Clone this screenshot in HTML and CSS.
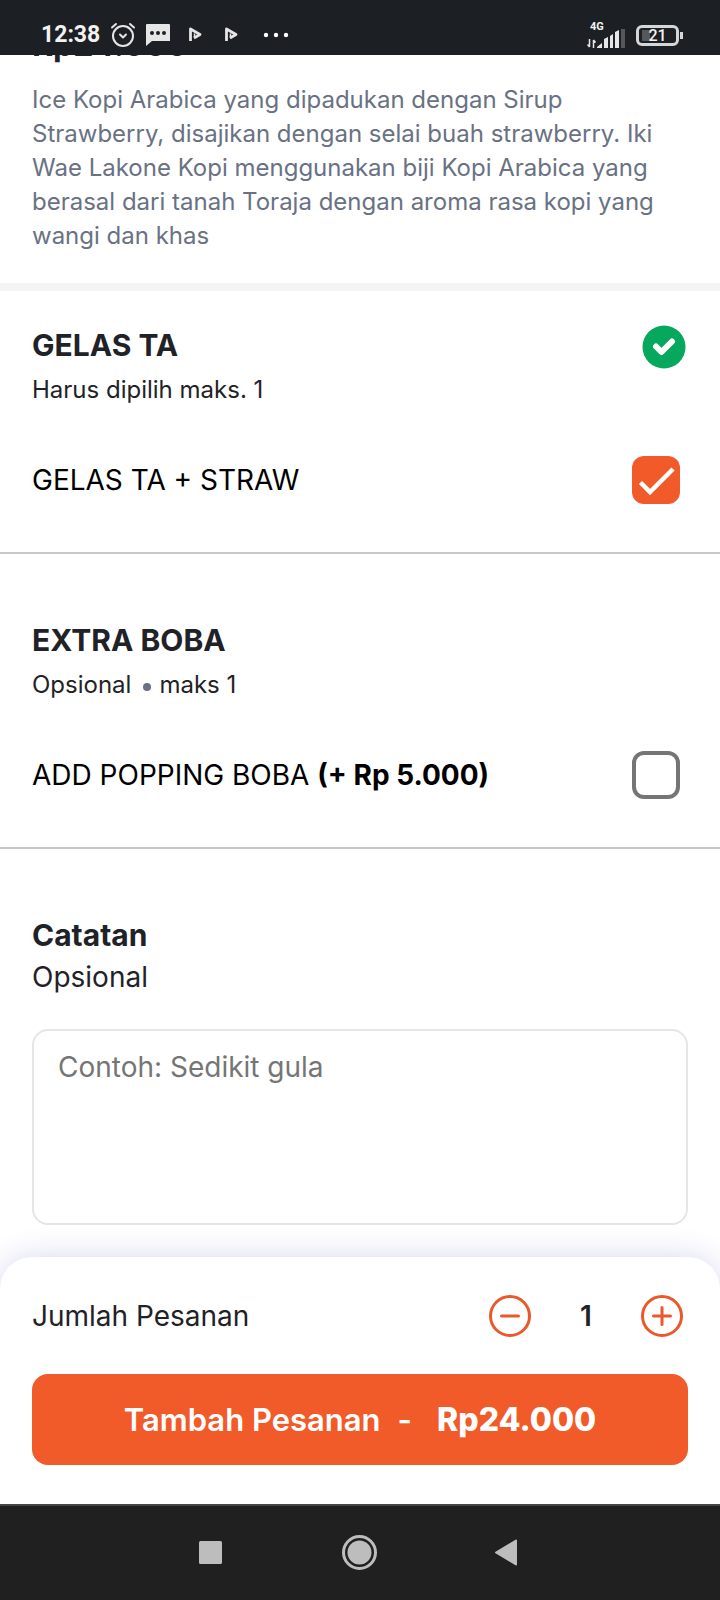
FILE: index.html
```html
<!DOCTYPE html>
<html lang="id">
<head>
<meta charset="utf-8">
<meta name="viewport" content="width=device-width, initial-scale=1">
<title>Tambah Pesanan</title>
<link rel="stylesheet" href="styles.css">
</head>
<body>
<div class="screen">
  <header class="status">
    <div class="status-left">
      <span class="clock">12:38</span>
      <svg class="icon-alarm" width="26" height="26" viewBox="0 0 26 26" fill="none" stroke="#e6e6e6" stroke-width="2" stroke-linecap="round" stroke-linejoin="round">
        <circle cx="13" cy="14" r="10"/><path d="M10 12.500l3 3 3-3M2 5.500l4-3.500M24 5.500l-4-3.500"/>
      </svg>
      <svg class="icon-chat" width="24" height="24" viewBox="0 0 24 24">
        <path d="M1 1h22a1 1 0 0 1 1 1v16H6l-6 5V2a1 1 0 0 1 1-1z" fill="#e6e6e6"/>
        <g fill="#1c1f24"><circle cx="6" cy="10" r="2"/><circle cx="12" cy="10" r="2"/><circle cx="18" cy="10" r="2"/></g>
      </svg>
      <svg class="icon-play" width="14" height="16" viewBox="0 0 14 16" fill="none" stroke="#e6e6e6" stroke-width="2.800" stroke-linejoin="round">
        <path d="M2.500 14V2l9.500 5.500-6 3.500"/><path d="M6.500 6.500v4" stroke-width="1.500"/>
      </svg>
      <svg class="icon-play" width="14" height="16" viewBox="0 0 14 16" fill="none" stroke="#e6e6e6" stroke-width="2.800" stroke-linejoin="round">
        <path d="M2.500 14V2l9.500 5.500-6 3.500"/><path d="M6.500 6.500v4" stroke-width="1.500"/>
      </svg>
      <svg class="icon-more" width="26" height="6" viewBox="0 0 26 6" fill="#fff"><circle cx="3" cy="3" r="2.200"/><circle cx="13" cy="3" r="2.200"/><circle cx="23" cy="3" r="2.200"/></svg>
    </div>
    <div class="status-right">
      <div class="network">
        <span class="network-type">4G</span>
        <svg width="38" height="20" viewBox="0 0 38 20" fill="#e6e6e6">
          <path d="M2.500 10v8M0.500 15.500l2 2.500M6.500 19v-8M8.500 13.500l-2-2.500" fill="none" stroke="#e6e6e6" stroke-width="1.500"/>
          <path d="M10 19v-1l5-4v5zM17 10l4-2v11h-4zM23 7l3-2v14h-3zM28 3l4-2v18h-4z"/>
          <path d="M34 0h4v19h-4z" fill="#55575b"/>
        </svg>
      </div>
      <div class="battery"><span>21</span></div>
    </div>
  </header>

  <main class="content">
    <section class="product">
      <p class="price">Rp24.000</p>
      <p class="description">Ice Kopi Arabica yang dipadukan dengan Sirup Strawberry, disajikan dengan selai buah strawberry. Iki Wae Lakone Kopi menggunakan biji Kopi Arabica yang berasal dari tanah Toraja dengan aroma rasa kopi yang wangi dan khas</p>
    </section>

    <section class="group group-first">
      <div class="group-head">
        <div>
          <h2 class="title">GELAS TA</h2>
          <p class="hint">Harus dipilih maks. 1</p>
        </div>
        <svg class="done" width="44" height="44" viewBox="0 0 44 44">
          <circle cx="22" cy="22" r="21.500" fill="#05a85c"/>
          <path d="M14 21.500l5.500 5.500L30 16.500" fill="none" stroke="#fff" stroke-width="6" stroke-linecap="round" stroke-linejoin="round"/>
        </svg>
      </div>
      <label class="option"><span>GELAS TA + STRAW</span><input class="check" type="checkbox" checked></label>
    </section>

    <section class="group">
      <div class="group-head">
        <div>
          <h2 class="title">EXTRA BOBA</h2>
          <p class="hint hint-split"><span>Opsional</span><i class="dot"></i><span>maks 1</span></p>
        </div>
      </div>
      <label class="option"><span>ADD POPPING BOBA <b>(+ Rp 5.000)</b></span><input class="check" type="checkbox"></label>
    </section>

    <section class="note">
      <label class="title" for="note">Catatan</label>
      <p class="note-hint">Opsional</p>
      <textarea class="note-input" id="note" placeholder="Contoh: Sedikit gula"></textarea>
    </section>
  </main>

  <footer class="sheet">
    <div class="quantity">
      <span>Jumlah Pesanan</span>
      <div class="stepper">
        <button type="button" class="step" aria-label="Kurangi">
          <svg width="44" height="44" viewBox="0 0 44 44" fill="none" stroke="#e9592b" stroke-width="3"><circle cx="22" cy="22" r="19.500"/><path d="M13.500 22h17" stroke-linecap="round"/></svg>
        </button>
        <output class="count">1</output>
        <button type="button" class="step" aria-label="Tambah">
          <svg width="44" height="44" viewBox="0 0 44 44" fill="none" stroke="#e9592b" stroke-width="3"><circle cx="22" cy="22" r="19.500"/><path d="M13.500 22h17M22 13.500v17" stroke-linecap="round"/></svg>
        </button>
      </div>
    </div>
    <button type="button" class="submit"><span>Tambah Pesanan</span><span>-</span><b>Rp24.000</b></button>
  </footer>

  <nav class="system-nav">
    <button type="button" class="nav-key" aria-label="Aplikasi terbaru"><svg width="36" height="36" viewBox="0 0 36 36"><rect x="6" y="7" width="23" height="23" rx="1.500" fill="#bdbdbd"/></svg></button>
    <button type="button" class="nav-key" aria-label="Beranda"><svg width="36" height="36" viewBox="0 0 36 36"><circle cx="17.500" cy="18.500" r="16" fill="none" stroke="#bdbdbd" stroke-width="3"/><circle cx="17.500" cy="18.500" r="12" fill="#bdbdbd"/></svg></button>
    <button type="button" class="nav-key" aria-label="Kembali"><svg width="36" height="36" viewBox="0 0 36 36"><path d="M5 18.500L25 6.500v24z" fill="#bdbdbd" stroke="#bdbdbd" stroke-width="2" stroke-linejoin="round"/></svg></button>
  </nav>
</div>
</body>
</html>
```

FILE: styles.css
```css
* {
  box-sizing: border-box;
}

body,
p,
h2 {
  margin: 0;
}

body {
  background: #fff;
  color: #1f2227;
  font-family: Inter, sans-serif;
  font-size: 28px;
  font-weight: 400;
  line-height: 36px;
}

button {
  padding: 0;
  border: 0;
  background: none;
  font: inherit;
  cursor: pointer;
}

svg {
  display: block;
}

.screen {
  display: flex;
  flex-direction: column;
  min-height: 100vh;
}

/* Status bar */
.status {
  position: sticky;
  top: 0;
  z-index: 2;
  display: flex;
  justify-content: space-between;
  padding: 15px 41px 0;
  height: 55px;
  background: #1c1f24;
  color: #f2f2f2;
  font-family: Roboto, sans-serif;
}

.status-left,
.status-right {
  display: flex;
  align-items: center;
  height: 40px;
}

.clock {
  font-size: 23px;
  font-weight: 700;
}

.icon-alarm,
.icon-chat {
  margin-left: 10px;
}

.icon-play {
  margin-left: 18px;
}

.icon-play + .icon-play {
  margin-left: 22px;
}

.icon-more {
  margin-left: 25px;
}

.network {
  display: flex;
  flex-direction: column;
  width: 38px;
}

.network-type {
  height: 8px;
  padding-left: 3px;
  font-size: 11px;
  font-weight: 700;
  line-height: 12px;
}

.battery {
  position: relative;
  width: 43px;
  height: 21px;
  margin-left: 11px;
  border: 3px solid #d5d6d8;
  border-radius: 6px;
  background: linear-gradient(#55575b, #55575b) 3px center / 8px 11px no-repeat;
  font-size: 16px;
  font-weight: 500;
  line-height: 15px;
  text-align: center;
}

.battery::after {
  content: "";
  position: absolute;
  top: 4px;
  right: -7px;
  width: 3px;
  height: 7px;
  background: #d5d6d8;
}

/* Content */
.content {
  flex: 1;
}

.product {
  padding: 0 32px 30px;
  border-bottom: 8px solid #f4f4f4;
}

.price {
  margin-top: -28px;
  font-size: 32px;
  font-weight: 700;
  line-height: 36px;
}

.description {
  padding-top: 20px;
  color: #697183;
  font-size: 24px;
  line-height: 34px;
}

.group {
  padding: 66px 32px 48px;
  border-bottom: 2px solid #c8c8c8;
}

.group-first {
  padding-top: 34px;
}

.group-head {
  display: flex;
  justify-content: space-between;
  align-items: flex-start;
}

.title {
  display: block;
  font-size: 30px;
  font-weight: 700;
  line-height: 40px;
}

.hint {
  margin-top: 9px;
  font-size: 24px;
  line-height: 32px;
}

.hint-split {
  display: flex;
  align-items: center;
}

.dot {
  width: 8px;
  height: 8px;
  margin: 4px 8px 0 12px;
  border-radius: 50%;
  background: #697183;
}

.done {
  margin-right: 2px;
}

.option {
  display: flex;
  justify-content: space-between;
  align-items: center;
  margin-top: 50px;
  padding-right: 8px;
  color: #000;
}

.option b {
  font-weight: 700;
}

.check {
  appearance: none;
  flex: none;
  width: 48px;
  height: 48px;
  margin: 0;
  border: 4px solid #757575;
  border-radius: 12px;
}

.check:checked {
  border: 0;
  background: #f15a29 url("data:image/svg+xml,%3Csvg xmlns='http://www.w3.org/2000/svg' viewBox='0 0 48 48'%3E%3Cpath d='M8.500 26.500L18 36L41 13' fill='none' stroke='%23fff' stroke-width='4.500'/%3E%3C/svg%3E");
}

.note {
  padding: 66px 32px 32px;
}

.note-hint {
  margin-top: 4px;
}

.note-input {
  display: block;
  width: 100%;
  height: 196px;
  margin-top: 34px;
  padding: 18px 24px;
  border: 2px solid #e5e5ea;
  border-radius: 16px;
  color: inherit;
  font: inherit;
  resize: none;
}

.note-input::placeholder {
  color: #757575;
}

/* Order sheet */
.sheet {
  padding: 37px 32px 39px;
  border-radius: 32px 32px 0 0;
  background: #fff;
  box-shadow: 0 0 32px #d8d8f2;
}

.quantity,
.stepper {
  display: flex;
  align-items: center;
}

.quantity {
  justify-content: space-between;
}

.stepper {
  padding-right: 4px;
}

.count {
  width: 108px;
  font-weight: 600;
  text-align: center;
}

.submit {
  display: flex;
  justify-content: center;
  align-items: center;
  width: 100%;
  height: 91px;
  margin-top: 36px;
  border-radius: 16px;
  background: #f15a29;
  color: #fff;
  font-size: 31px;
  font-weight: 600;
  gap: 17px;
}

.submit b {
  margin-left: 8px;
  font-size: 32px;
  font-weight: 800;
}

/* System navigation */
.system-nav {
  position: relative;
  display: flex;
  justify-content: center;
  gap: 113px;
  padding: 28px 0 30px;
  border-top: 2px solid #454545;
  background: #202020;
}
```
